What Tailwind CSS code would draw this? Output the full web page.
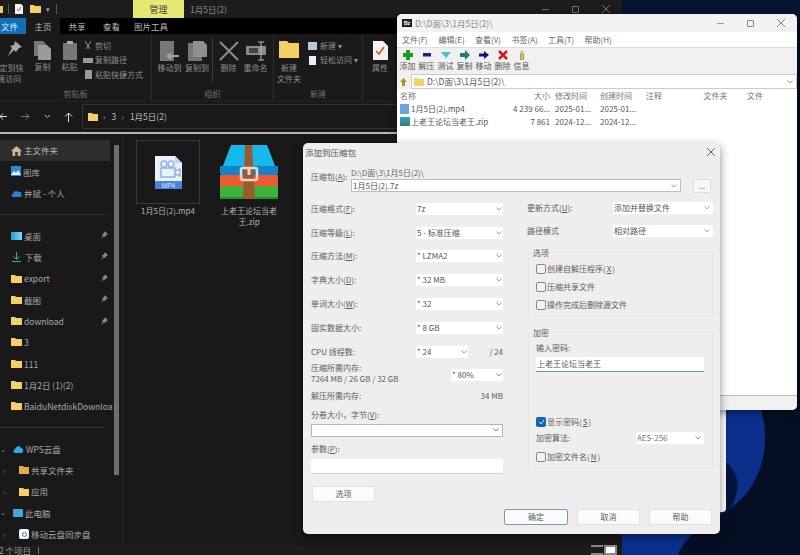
<!DOCTYPE html>
<html lang="zh-CN">
<head>
<meta charset="UTF-8">
<title>添加到压缩包</title>
<script src="https://cdn.jsdelivr.net/npm/@tailwindcss/browser@4"></script>
</head>
<body class="w-[800px] h-[555px] overflow-hidden relative bg-[#03102a] font-['Noto_Sans_CJK_SC','Noto_Sans',sans-serif] text-[9px] leading-none">

<!-- wallpaper -->
<svg class="absolute inset-0" width="800" height="555" viewBox="0 0 800 555">
  <rect width="800" height="555" fill="#040f24"/>
  <path d="M622 0H800V14H622Z" fill="#061433"/>
  <path d="M700 405H760C770 440 765 470 745 495C722 520 690 525 678 555H622V534H700Z" fill="#0c2f8c"/>
  <path d="M726 462C740 475 742 490 728 512L726 512Z" fill="#04123a"/>
</svg>

<!-- explorer window -->
<div class="absolute left-0 top-0 w-[622px] h-[555px] bg-[#191919] text-[#b9b9b9] flex flex-col overflow-hidden">
  <!-- title -->
  <div class="h-[18px] flex items-center bg-[#1c1c1c] shrink-0">
    <div class="w-[3px] h-[7px] bg-[#f4c95d]"></div>
    <div class="w-px h-[10px] bg-[#555] ml-[5px]"></div>
    <svg class="ml-[6px]" width="8" height="10" viewBox="0 0 8 10"><path d="M0 0H6L8 2V10H0Z" fill="#f4f4f4"/><path d="M2 5L3.500 7L6 3" stroke="#d9552b" fill="none"/></svg>
    <svg class="ml-[7px]" width="11" height="8" viewBox="0 0 11 8"><path d="M0 0H4L5 1H11V8H0Z" fill="#f6cf66"/></svg>
    <span class="ml-[5px] text-[7px] text-[#aaa]">▾</span>
    <div class="w-px h-[10px] bg-[#555] ml-[6px]"></div>
    <div class="ml-[76px] w-[51px] h-[18px] bg-[#e6e872] text-[#444] flex items-center justify-center text-[9px]">管理</div>
    <span class="ml-[6px] text-[8.500px] text-[#8a8a8a]">1月5日(2)</span>
    <div class="ml-auto flex items-center gap-[23px] pr-[12px] text-[#777]">
      <div class="w-[7px] h-px bg-[#777]"></div>
      <div class="w-[7px] h-[7px] border border-[#777] rounded-[1px]"></div>
      <svg width="8" height="8" viewBox="0 0 8 8"><path d="M0 0L8 8M8 0L0 8" stroke="#777"/></svg>
    </div>
  </div>
  <!-- tabs -->
  <div class="h-[16px] bg-black flex items-center shrink-0 text-[8.500px]">
    <div class="w-[26px] h-full bg-[#0f6fb8] text-[#dcefff] flex items-center pl-px">文件</div>
    <div class="w-[34px] h-full bg-[#1a1a1a] flex items-center justify-center">主页</div>
    <div class="w-[34px] text-center">共享</div>
    <div class="w-[35px] text-center">查看</div>
    <div class="ml-[5px]">图片工具</div>
  </div>
  <!-- ribbon -->
  <div class="h-[68px] bg-[#1a1a1a] flex shrink-0 text-[8px] text-[#8f8f8f] border-b border-[#222]">
    <div class="w-[152px] border-r border-[#2c2c2c] flex flex-col">
      <div class="flex-1 flex pt-[7px]">
        <div class="w-[29px] flex flex-col items-center">
          <svg width="17" height="16" viewBox="0 0 17 16"><path d="M9 0L16 6L13 7L10 11L8 9L2 15L6 7L4 5L8 4Z" fill="#a7a7a7"/></svg>
          <div class="mt-[5px] leading-[11px] text-center -ml-[14px] w-[36px] whitespace-nowrap">固定到快<br>&nbsp;&nbsp;速访问</div>
        </div>
        <div class="w-[27px] flex flex-col items-center">
          <svg width="17" height="19" viewBox="0 0 17 19"><path d="M0 0H9L12 3V15H0Z" fill="#777"/><path d="M4 4H13L17 8V19H4Z" fill="#9b9b9b"/></svg>
          <div class="mt-[3px]">复制</div>
        </div>
        <div class="w-[27px] flex flex-col items-center">
          <svg width="14" height="19" viewBox="0 0 14 19"><rect y="2" width="14" height="17" fill="#777"/><rect x="4" width="6" height="3" fill="#aaa"/></svg>
          <div class="mt-[3px]">粘贴</div>
        </div>
        <div class="flex flex-col gap-[3.500px] -mt-[1px] text-[#8f8f8f]">
          <div class="flex items-center gap-[2px] h-[11px]"><svg width="10" height="9" viewBox="0 0 10 9"><path d="M2 0L7 8M8 0L3 8" stroke="#999"/></svg>剪切</div>
          <div class="flex items-center gap-[2px] h-[11px]"><div class="w-[10px] h-[5px] bg-[#999]"></div>复制路径</div>
          <div class="flex items-center gap-[2px] h-[11px]"><div class="w-[7px] h-[9px] mx-[1.500px] bg-[#999]"></div>粘贴快捷方式</div>
        </div>
      </div>
      <div class="h-[15px] flex items-center justify-center text-[#6f6f6f]">剪贴板</div>
    </div>
    <div class="w-[122px] border-r border-[#2c2c2c] flex flex-col">
      <div class="flex-1 flex pt-[7px] pl-[4px]">
        <div class="w-[27px] flex flex-col items-center">
          <svg width="19" height="20" viewBox="0 0 19 20"><path d="M0 0H14V20H0Z" fill="#777"/><path d="M19 14H11V11L6 15L11 19V16H19Z" fill="#a3a3a3"/></svg>
          <div class="mt-[3px] whitespace-nowrap">移动到</div>
        </div>
        <div class="w-[28px] flex flex-col items-center">
          <svg width="19" height="20" viewBox="0 0 19 20"><path d="M0 2H14V20H0Z" fill="#777"/><path d="M5 0H15L19 4V16H5Z" fill="#8f8f8f"/></svg>
          <div class="mt-[3px] whitespace-nowrap">复制到</div>
        </div>
        <div class="w-px h-[44px] bg-[#3a3a3a] ml-[1px] -mt-[3px]"></div>
        <div class="w-[27px] ml-[2px] flex flex-col items-center">
          <svg width="20" height="20" viewBox="0 0 20 20"><path d="M1 1L19 19M19 1L1 19" stroke="#8c8c8c" stroke-width="2"/></svg>
          <div class="mt-[3px]">删除</div>
        </div>
        <div class="w-[27px] flex flex-col items-center">
          <svg width="20" height="20" viewBox="0 0 20 20"><rect x="0" y="5" width="20" height="9" fill="#8a8a8a"/><rect x="3" y="7" width="9" height="5" fill="#444"/><path d="M15 1V19M12 1H18M12 19H18" stroke="#bbb"/></svg>
          <div class="mt-[3px] whitespace-nowrap">重命名</div>
        </div>
      </div>
      <div class="h-[15px] flex items-center justify-center text-[#6f6f6f]">组织</div>
    </div>
    <div class="w-[89px] border-r border-[#2c2c2c] flex flex-col">
      <div class="flex-1 flex pt-[7px] pl-[2px]">
        <div class="w-[26px] flex flex-col items-center">
          <svg width="20" height="17" viewBox="0 0 20 17"><path d="M0 0H8L10 2H20V17H0Z" fill="#f6cf66"/></svg>
          <div class="mt-[4px] leading-[11px] text-center">新建<br><span class="whitespace-nowrap">文件夹</span></div>
        </div>
        <div class="flex flex-col gap-[3.500px] pl-[6px] -mt-[1px]">
          <div class="flex items-center gap-[3px] h-[11px]"><div class="w-[9px] h-[8px] bg-[#b8c8d8]"></div>新建 ▾</div>
          <div class="flex items-center gap-[3px] h-[11px] whitespace-nowrap"><div class="w-[7px] h-[9px] mx-px bg-[#eee]"></div>轻松访问 ▾</div>
        </div>
      </div>
      <div class="h-[15px] flex items-center justify-center text-[#6f6f6f]">新建</div>
    </div>
    <div class="w-[34px] flex flex-col pt-[7px] items-center">
      <svg width="15" height="19" viewBox="0 0 15 19"><path d="M0 0H10L15 5V19H0Z" fill="#f2f2f2"/><path d="M3 10L6 13L11 6" stroke="#d9552b" stroke-width="1.600" fill="none"/></svg>
      <div class="mt-[4px]">属性</div>
    </div>
  </div>
  <!-- address bar -->
  <div class="h-[30px] pb-[1px] flex items-center shrink-0 text-[#aaa] bg-[#191919]">
    <svg class="ml-[-1px]" width="9" height="9" viewBox="0 0 9 9"><path d="M8 4.500H1M4 1.500L1 4.500L4 7.500" stroke="#ddd" fill="none"/></svg>
    <svg class="ml-[13px]" width="9" height="9" viewBox="0 0 9 9"><path d="M0 4.500H8M5 1.500L8 4.500L5 7.500" stroke="#777" fill="none"/></svg>
    <svg class="ml-[14px]" width="7" height="5" viewBox="0 0 7 5"><path d="M1 1L3.500 3.500L6 1" stroke="#bbb" fill="none"/></svg>
    <svg class="ml-[13px]" width="9" height="10" viewBox="0 0 9 10"><path d="M4.500 10V1M1 4.500L4.500 1L8 4.500" stroke="#ddd" fill="none"/></svg>
    <div class="ml-[9px] h-[25px] w-[320px] border border-[#333] flex items-center pl-[5px] text-[8.500px] text-[#bbb]">
      <svg width="10" height="8" viewBox="0 0 10 8"><path d="M0 0H4L5 1H10V8H0Z" fill="#f6cf66"/></svg>
      <span class="ml-[5px] text-[#999]">›</span><span class="ml-[6px]">3</span><span class="ml-[5px] text-[#999]">›</span><span class="ml-[6px]">1月5日(2)</span>
    </div>
  </div>
  <div class="h-[2px] bg-[#b5b5b5] shrink-0"></div>
  <!-- body -->
  <div class="flex-1 flex min-h-0">
    <div class="w-[123px] border-r border-[#2a2a2a] shrink-0 flex pt-[6px] relative">
      <div class="w-[114px] flex flex-col text-[8.500px] text-[#a8a8a8] whitespace-nowrap overflow-hidden">
        <div class="h-[21.400px] flex items-center bg-[#2d2d2d] w-[110px] pl-[11px] gap-[2px] text-[#bbb]">
          <svg width="11" height="10" viewBox="0 0 11 10"><path d="M5.500 0L11 5H9.500V10H1.500V5H0Z" fill="#d9b48f"/><rect x="4" y="6" width="3" height="4" fill="#444"/></svg>主文件夹
        </div>
        <div class="h-[21.400px] flex items-center pl-[11px] gap-[2px]"><svg width="10" height="11" viewBox="0 0 10 11"><rect width="10" height="10" fill="#2e86de"/><path d="M0 9L3 5L5 7L7 4L10 9Z" fill="#dff"/></svg>图库</div>
        <div class="h-[21.400px] flex items-center pl-[11px] gap-[2px]"><svg width="11" height="7" viewBox="0 0 11 7"><path d="M2 7C0 7 0 4 2 4C2 1 6 0 7 2C9 1 11 3 10 4C11 5 11 7 9 7Z" fill="#2f7fd8"/></svg>井斌 - 个人</div>
        <div class="h-[21.400px] flex items-center"><div class="w-[105px] h-px bg-[#333]"></div></div>
        <div class="h-[21.400px] flex items-center pl-[11px] gap-[2px]"><div class="w-[11px] h-[8px] bg-gradient-to-r from-[#1f9bd1] to-[#7fd8f0]"></div>桌面</div>
        <div class="h-[21.400px] flex items-center pl-[12px] gap-[2px]"><svg width="9" height="10" viewBox="0 0 9 10"><path d="M4.500 0V7M1.500 4.500L4.500 7.500L7.500 4.500M0 9.500H9" stroke="#35b38f" fill="none"/></svg>&thinsp;下载</div>
        <div class="h-[21.400px] flex items-center pl-[11px] gap-[2px]"><svg width="11" height="8" viewBox="0 0 11 8"><path d="M0 0H4L5 1H11V8H0Z" fill="#f6cf66"/></svg>export</div>
        <div class="h-[21.400px] flex items-center pl-[11px] gap-[2px]"><svg width="11" height="8" viewBox="0 0 11 8"><path d="M0 0H4L5 1H11V8H0Z" fill="#f6cf66"/></svg>截图</div>
        <div class="h-[21.400px] flex items-center pl-[11px] gap-[2px]"><svg width="11" height="8" viewBox="0 0 11 8"><path d="M0 0H4L5 1H11V8H0Z" fill="#f6cf66"/></svg>download</div>
        <div class="h-[21.400px] flex items-center pl-[11px] gap-[2px]"><svg width="11" height="8" viewBox="0 0 11 8"><path d="M0 0H4L5 1H11V8H0Z" fill="#f6cf66"/></svg>3</div>
        <div class="h-[21.400px] flex items-center pl-[11px] gap-[2px]"><svg width="11" height="8" viewBox="0 0 11 8"><path d="M0 0H4L5 1H11V8H0Z" fill="#f6cf66"/></svg>111</div>
        <div class="h-[21.400px] flex items-center pl-[11px] gap-[2px]"><svg width="11" height="8" viewBox="0 0 11 8"><path d="M0 0H4L5 1H11V8H0Z" fill="#f6cf66"/></svg>1月2日 (1)(2)</div>
        <div class="h-[21.400px] flex items-center pl-[11px] gap-[2px]"><svg class="shrink-0" width="11" height="8" viewBox="0 0 11 8"><path d="M0 0H4L5 1H11V8H0Z" fill="#f6cf66"/></svg>BaiduNetdiskDownloa</div>
        <div class="h-[21.400px] flex items-center"><div class="w-[105px] h-px bg-[#333]"></div></div>
        <div class="h-[21.400px] flex items-center gap-[2px]"><span class="w-[11px] text-[#999] text-[7px]">⌄</span><svg width="11" height="8" viewBox="0 0 11 8"><path d="M2 8C0 8 0 5 2 4C3 1 7 0 8 3C10 3 11 6 9 8Z" fill="#2fa8e8"/></svg>WPS云盘</div>
        <div class="h-[21.400px] flex items-center pl-[3px] gap-[2px]"><span class="w-[14px] text-[#777]">›</span><svg width="10" height="8" viewBox="0 0 10 8"><path d="M0 0H4L5 1H10V8H0Z" fill="#e3ae4a"/></svg>共享文件夹</div>
        <div class="h-[21.400px] flex items-center pl-[3px] gap-[2px]"><span class="w-[14px] text-[#777]">›</span><svg width="10" height="8" viewBox="0 0 10 8"><path d="M0 0H4L5 1H10V8H0Z" fill="#f6cf66"/></svg>应用</div>
        <div class="h-[21.400px] flex items-center gap-[2px]"><span class="w-[11px] text-[#999] text-[7px]">⌄</span><div class="w-[10px] h-[8px] bg-[#3fa6d8] rounded-[1px]"></div>此电脑</div>
        <div class="h-[21.400px] flex items-center pl-[3px] gap-[2px]"><span class="w-[14px] text-[#777]">›</span><div class="w-[10px] h-[10px] bg-[#f4f8fb] rounded-[2px] flex items-center justify-center"><div class="w-[5px] h-[5px] rounded-full border border-[#2f8fd8]"></div></div>移动云盘同步盘</div>
      </div>
      <!-- pins -->
      <div class="absolute left-[101px] top-[90px] flex flex-col">
        <svg class="h-[21.400px]" width="7" height="21" viewBox="0 0 7 21"><path d="M4 7L7 10L5 11L4 13L3 12L0 15L2 11L1 10L3 9Z" fill="#8a8a8a"/></svg>
        <svg class="h-[21.400px]" width="7" height="21" viewBox="0 0 7 21"><path d="M4 7L7 10L5 11L4 13L3 12L0 15L2 11L1 10L3 9Z" fill="#8a8a8a"/></svg>
        <svg class="h-[21.400px]" width="7" height="21" viewBox="0 0 7 21"><path d="M4 7L7 10L5 11L4 13L3 12L0 15L2 11L1 10L3 9Z" fill="#8a8a8a"/></svg>
        <svg class="h-[21.400px]" width="7" height="21" viewBox="0 0 7 21"><path d="M4 7L7 10L5 11L4 13L3 12L0 15L2 11L1 10L3 9Z" fill="#8a8a8a"/></svg>
        <svg class="h-[21.400px]" width="7" height="21" viewBox="0 0 7 21"><path d="M4 7L7 10L5 11L4 13L3 12L0 15L2 11L1 10L3 9Z" fill="#8a8a8a"/></svg>
      </div>
      <!-- scrollbar -->
      <div class="absolute left-[114px] top-[11px] w-[5px] h-[330px] bg-[#6f6f6f]"></div>
    </div>
    <!-- files -->
    <div class="flex-1 flex items-start pl-[13px] pt-[6px] gap-[17px] text-[8px] text-[#b5b5b5] text-center">
      <div class="w-[64px] flex flex-col items-center">
        <div class="w-[64px] h-[64px] border border-[#3a3a3a] flex items-center justify-center">
          <svg width="27" height="33" viewBox="0 0 27 33"><path d="M0 0H20L27 7V33H0Z" fill="#eaf1fb"/><path d="M20 0L27 7H20Z" fill="#bcd2f2"/><rect y="25" width="27" height="8" fill="#4c84dc"/><g fill="none" stroke="#8fb2e8" stroke-width="1.500"><circle cx="9" cy="8" r="3"/><circle cx="16" cy="8" r="3"/><rect x="6" y="12" width="14" height="9"/><path d="M20 15L25 13V20L20 18"/></g><text x="13.500" y="31.500" font-size="6.500" fill="#dce8fa" text-anchor="middle" font-family="Liberation Sans">MP4</text></svg>
        </div>
        <div class="mt-[3px] whitespace-nowrap">1月5日(2).mp4</div>
      </div>
      <div class="w-[64px] flex flex-col items-center">
        <svg class="mt-[5px]" width="60" height="55" viewBox="0 0 60 55"><path d="M12 0H48L58 26H2Z" fill="#17b9ec"/><path d="M1 21H59V28Q59 30 57 30H3Q1 30 1 28Z" fill="#1484c7"/><rect x="1" y="30" width="58" height="12" fill="#ee5a34"/><rect x="1" y="41" width="58" height="13" rx="2" fill="#3fb23a"/><rect x="1" y="52" width="58" height="2" fill="#2c8d2a"/><path d="M26 0H33L36 54H24Z" fill="#9a5a30"/><rect x="22" y="23" width="16" height="12" rx="2" fill="none" stroke="#ead9c8" stroke-width="2.500"/><rect x="28.500" y="24" width="3" height="6" fill="#ead9c8"/></svg>
        <div class="mt-[5px] leading-[11px] w-[60px]">上老王论坛当老王.zip</div>
      </div>
    </div>
  </div>
  <!-- status -->
  <div class="h-[10px] shrink-0 bg-[#1c1c1c] flex items-center text-[8.500px] text-[#999] relative">
    <span class="-ml-px">2 个项目</span><div class="ml-[7px] w-px h-[7px] bg-[#777]"></div>
    <div class="ml-auto mr-[5px] flex items-center gap-[1px]">
      <div class="w-[12px] h-[10px] border-y-2 border-[#888]"></div>
      <div class="w-[13px] h-[10px] border-2 border-[#888] bg-white"></div>
    </div>
  </div>
</div>

<!-- white window behind the dialog -->
<div class="absolute left-[700px] top-[400px] w-[26px] h-[112px] bg-white rounded-br-[4px]"></div>

<!-- winrar window -->
<div class="absolute left-[397px] top-[14px] w-[400px] h-[396px] bg-white rounded-[5px] overflow-hidden flex flex-col text-[#555] shadow-[0_2px_8px_rgba(0,0,0,0.5)] text-[8.500px]">
  <div class="h-[18px] bg-[#f2f2f2] flex items-center shrink-0 pl-[5px]">
    <div class="w-[10px] h-[8px] bg-[#333] border border-[#111] flex items-center justify-center text-[5px] text-white font-bold font-['Liberation_Sans']">Bz</div>
    <span class="ml-[3px] text-[#888]">D:\D面\3\1月5日(2)\</span>
    <div class="ml-auto flex items-center gap-[23px] pr-[12px]">
      <div class="w-[7px] h-px bg-[#999]"></div>
      <div class="w-[7px] h-[7px] border border-[#888] rounded-[1px]"></div>
      <svg width="8" height="8" viewBox="0 0 8 8"><path d="M0 0L8 8M8 0L0 8" stroke="#888"/></svg>
    </div>
  </div>
  <div class="h-[15px] pt-px bg-white flex items-center shrink-0 pl-[5px] text-[8px] text-[#666] whitespace-nowrap">
    <span class="w-[36.500px]">文件(F)</span><span class="w-[36.500px]">编辑(E)</span><span class="w-[36.500px]">查看(V)</span><span class="w-[36.500px]">书签(A)</span><span class="w-[36.500px]">工具(T)</span><span class="w-[36.500px]">帮助(H)</span>
  </div>
  <div class="h-[27px] bg-[#f0f0f0] flex shrink-0 pl-[1px] text-[8px] text-[#555] border-t border-[#ddd]">
    <div class="w-[19px] flex flex-col items-center pt-[2px] gap-[2px]"><svg width="10" height="10" viewBox="0 0 10 10"><path d="M3 0H7V3H10V7H7V10H3V7H0V3H3Z" fill="#1aa01a"/></svg>添加</div>
    <div class="w-[19px] flex flex-col items-center pt-[2px] gap-[2px]"><svg width="10" height="10" viewBox="0 0 10 10"><rect x="1" y="3" width="8" height="3.500" fill="#1d1d9c"/></svg>解压</div>
    <div class="w-[19px] flex flex-col items-center pt-[2px] gap-[2px]"><svg width="10" height="10" viewBox="0 0 10 10"><path d="M0 2H10L5 8Z" fill="#3fc4d6"/></svg>测试</div>
    <div class="w-[19px] flex flex-col items-center pt-[2px] gap-[2px]"><svg width="10" height="10" viewBox="0 0 10 10"><path d="M0 3H5V0L10 5L5 10V7H0Z" fill="#14806f"/></svg>复制</div>
    <div class="w-[19px] flex flex-col items-center pt-[2px] gap-[2px]"><svg width="10" height="10" viewBox="0 0 10 10"><path d="M0 3.500H5V1L10 5L5 9V6.500H0Z" fill="#14147c"/></svg>移动</div>
    <div class="w-[19px] flex flex-col items-center pt-[2px] gap-[2px]"><svg width="10" height="10" viewBox="0 0 10 10"><path d="M1 1L9 9M9 1L1 9" stroke="#d41b1b" stroke-width="2.500"/></svg>删除</div>
    <div class="w-[19px] flex flex-col items-center pt-[2px] gap-[2px]"><svg width="10" height="10" viewBox="0 0 10 10"><circle cx="5" cy="2" r="1.500" fill="#d8c23c"/><rect x="3.500" y="4" width="3" height="6" fill="#d8c23c" stroke="#666" stroke-width=".5"/></svg>信息</div>
  </div>
  <div class="h-[15px] bg-[#f0f0f0] flex items-center shrink-0 pl-[3px]">
    <svg width="7" height="8" viewBox="0 0 7 8"><path d="M3.500 0L7 4H5V8H2V4H0Z" fill="#9a9a2a"/></svg>
    <div class="ml-[4px] flex-1 h-[15px] bg-white border border-[#ccc] flex items-center pl-[2px] text-[#555]">
      <svg width="10" height="8" viewBox="0 0 10 8"><path d="M0 0H4L5 1H10V8H0Z" fill="#f6cf66"/></svg><span class="ml-[3px]">D:\D面\3\1月5日(2)\</span>
      <svg class="ml-auto mr-[3px]" width="6" height="4" viewBox="0 0 6 4"><path d="M.5 .5L3 3L5.500 .5" stroke="#999" fill="none"/></svg>
    </div>
  </div>
  <div class="flex-1 bg-white flex flex-col min-h-0 text-[8px]">
    <div class="h-[14px] flex items-center shrink-0 text-[#777]">
      <span class="w-[113px] pl-[3px]">名称</span><span class="w-[43px] text-right pr-[3px]">大小</span>
      <span class="w-[45px] pl-[2px]">修改时间</span><span class="w-[45px] pl-[2px]">创建时间</span>
      <span class="w-[45px] pl-[3px]">注释</span><span class="w-[55px] text-center">文件夹</span><span class="w-[45px] pl-[4px]">文件</span>
    </div>
    <div class="h-[13px] mt-[-1px] flex items-center shrink-0 text-[#555]">
      <span class="w-[113px] pl-[3px] flex items-center gap-[2px]"><span class="w-[9px] h-[10px] bg-[#6fa3dc] inline-block"></span>1月5日(2).mp4</span><span class="w-[43px] text-right pr-[3px] whitespace-nowrap">4 239 66...</span>
      <span class="w-[45px] pl-[2px] whitespace-nowrap">2025-01...</span><span class="w-[45px] pl-[2px] whitespace-nowrap">2025-01...</span>
    </div>
    <div class="h-[13px] flex items-center shrink-0 text-[#555]">
      <span class="w-[113px] pl-[3px] flex items-center gap-[1px] whitespace-nowrap"><span class="w-[10px] h-[9px] bg-gradient-to-b from-[#2aa3d8] to-[#3a7a6a] inline-block"></span>上老王论坛当老王.zip</span><span class="w-[43px] text-right pr-[3px]">7 861</span>
      <span class="w-[45px] pl-[2px] whitespace-nowrap">2024-12...</span><span class="w-[45px] pl-[2px] whitespace-nowrap">2024-12...</span>
    </div>
  </div>
  <div class="h-[15px] bg-[#f0f0f0] border-t border-[#bbb] shrink-0"></div>
</div>

<!-- compression dialog -->
<div class="absolute left-[303px] top-[143px] w-[417px] h-[391px] bg-[#eeeeee] rounded-[5px] shadow-[0_3px_10px_rgba(0,0,0,0.45)] flex flex-col text-[#5c5c5c] text-[8px] whitespace-nowrap">
  <div class="h-[16px] flex items-center pl-[2px] justify-between shrink-0 pt-[2px] text-[#555]">
    <span class="text-[8.500px]">添加到压缩包</span>
    <svg class="mr-[5px]" width="8" height="8" viewBox="0 0 8 8"><path d="M0 0L8 8M8 0L0 8" stroke="#666"/></svg>
  </div>
  <!-- archive name -->
  <div class="flex pl-[8px] pr-[9px] shrink-0 h-[35px]">
    <span class="w-[40px] pt-[14px]">压缩包(<u>A</u>):</span>
    <div class="flex flex-col gap-[2px] pt-[10px]">
      <span class="text-[8px] text-[#666]">D:\D面\3\1月5日(2)\</span>
      <div class="w-[330px] h-[13px] bg-white border border-[#bdbdbd] flex items-center pl-[1px] text-[#555]">1月5日(2).7z
        <svg class="ml-auto mr-[3px]" width="6" height="4" viewBox="0 0 6 4"><path d="M.5 .5L3 3L5.500 .5" stroke="#aaa" fill="none"/></svg>
      </div>
    </div>
    <div class="ml-[12px] mt-[20px] w-[18px] h-[14px] bg-[#f7f7f7] border border-[#ddd] flex items-center justify-center text-[#777]">...</div>
  </div>
  <div class="flex flex-1 min-h-0 pl-[8px] pr-[7px]">
    <!-- left column -->
    <div class="w-[192px] flex flex-col pt-[3px]">
      <div class="h-[23.800px] flex items-center justify-between"><span>压缩格式(<u>F</u>):</span><span class="w-[87px] h-[12px] bg-white flex items-center justify-between px-px text-[#555]">7z<svg width="6" height="4" viewBox="0 0 6 4"><path d="M.5 .5L3 3L5.500 .5" stroke="#999" fill="none"/></svg></span></div>
      <div class="h-[23.800px] flex items-center justify-between"><span>压缩等级(<u>L</u>):</span><span class="w-[87px] h-[12px] bg-white flex items-center justify-between px-px text-[#555]">5 - 标准压缩<svg width="6" height="4" viewBox="0 0 6 4"><path d="M.5 .5L3 3L5.500 .5" stroke="#999" fill="none"/></svg></span></div>
      <div class="h-[23.800px] flex items-center justify-between"><span>压缩方法(<u>M</u>):</span><span class="w-[87px] h-[12px] bg-white flex items-center justify-between px-px text-[#555]">* LZMA2<svg width="6" height="4" viewBox="0 0 6 4"><path d="M.5 .5L3 3L5.500 .5" stroke="#999" fill="none"/></svg></span></div>
      <div class="h-[23.800px] flex items-center justify-between"><span>字典大小(<u>D</u>):</span><span class="w-[87px] h-[12px] bg-white flex items-center justify-between px-px text-[#555]">* 32 MB<svg width="6" height="4" viewBox="0 0 6 4"><path d="M.5 .5L3 3L5.500 .5" stroke="#999" fill="none"/></svg></span></div>
      <div class="h-[23.800px] flex items-center justify-between"><span>单词大小(<u>W</u>):</span><span class="w-[87px] h-[12px] bg-white flex items-center justify-between px-px text-[#555]">* 32<svg width="6" height="4" viewBox="0 0 6 4"><path d="M.5 .5L3 3L5.500 .5" stroke="#999" fill="none"/></svg></span></div>
      <div class="h-[23.800px] flex items-center justify-between"><span>固实数据大小:</span><span class="w-[87px] h-[12px] bg-white flex items-center justify-between px-px text-[#555]">* 8 GB<svg width="6" height="4" viewBox="0 0 6 4"><path d="M.5 .5L3 3L5.500 .5" stroke="#999" fill="none"/></svg></span></div>
      <div class="h-[23.800px] flex items-center"><span class="w-[105px]">CPU 线程数:</span><span class="w-[52px] h-[12px] bg-white flex items-center justify-between px-px text-[#555]">* 24<svg width="6" height="4" viewBox="0 0 6 4"><path d="M.5 .5L3 3L5.500 .5" stroke="#999" fill="none"/></svg></span><span class="ml-auto">/ 24</span></div>
      <div class="h-[26px] flex items-center justify-between -mt-[3px]">
        <span class="flex flex-col gap-[3px]"><span>压缩所需内存:</span><span>7264 MB / 26 GB / 32 GB</span></span>
        <span class="w-[52px] h-[12px] mt-[2px] bg-white flex items-center justify-between px-px text-[#555]">* 80%<svg width="6" height="4" viewBox="0 0 6 4"><path d="M.5 .5L3 3L5.500 .5" stroke="#999" fill="none"/></svg></span>
      </div>
      <div class="h-[14px] flex items-center justify-between mt-[2px]"><span>解压所需内存:</span><span>34 MB</span></div>
      <div class="mt-[8px] h-[10px]">分卷大小，字节(<u>V</u>):</div>
      <div class="mt-[3px] h-[13px] bg-white border border-[#b5b5b5] flex items-center justify-end pr-[3px]"><svg width="6" height="4" viewBox="0 0 6 4"><path d="M.5 .5L3 3L5.500 .5" stroke="#888" fill="none"/></svg></div>
      <div class="mt-[8px] h-[10px]">参数(<u>P</u>):</div>
      <div class="mt-[4px] h-[15px] bg-white border-b border-[#d5d5d5]"></div>
      <div class="mt-[12px] ml-px w-[63px] h-[16px] bg-[#fbfbfb] border border-[#e2e2e2] flex items-center justify-center">选项</div>
    </div>
    <!-- right column -->
    <div class="ml-[24px] flex-1 flex flex-col pt-[3px] min-w-0">
      <div class="h-[22.500px] flex items-center justify-between"><span>更新方式(<u>U</u>):</span><span class="w-[100px] h-[12px] bg-white flex items-center justify-between px-px pr-[3px] text-[#555]">添加并替换文件<svg width="6" height="4" viewBox="0 0 6 4"><path d="M.5 .5L3 3L5.500 .5" stroke="#aaa" fill="none"/></svg></span></div>
      <div class="h-[22.500px] flex items-center justify-between"><span>路径模式</span><span class="w-[100px] h-[12px] bg-white flex items-center justify-between px-px pr-[3px] text-[#555]">相对路径<svg width="6" height="4" viewBox="0 0 6 4"><path d="M.5 .5L3 3L5.500 .5" stroke="#aaa" fill="none"/></svg></span></div>
      <!-- options group -->
      <div class="mt-[10px] h-[65px] ml-px border border-[#e6e6e6] rounded-[2px] relative flex flex-col pl-[7px] pt-[10px] gap-[6px]">
        <span class="absolute -top-[4px] left-[3px] bg-[#eeeeee] px-px">选项</span>
        <label class="flex items-center gap-[1px] h-[12px]"><span class="w-[10px] h-[10px] border border-[#888] rounded-[2px] bg-[#f2f2f2]"></span>创建自解压程序(<u>X</u>)</label>
        <label class="flex items-center gap-[1px] h-[12px]"><span class="w-[10px] h-[10px] border border-[#888] rounded-[2px] bg-[#f2f2f2]"></span>压缩共享文件</label>
        <label class="flex items-center gap-[1px] h-[12px]"><span class="w-[10px] h-[10px] border border-[#888] rounded-[2px] bg-[#f2f2f2]"></span>操作完成后删除源文件</label>
      </div>
      <!-- encryption group -->
      <div class="mt-[15px] h-[137px] ml-px border border-[#e6e6e6] rounded-[2px] relative flex flex-col pl-[7px] pr-[8px] pt-[11px]">
        <span class="absolute -top-[4px] left-[3px] bg-[#eeeeee] px-px">加密</span>
        <span class="h-[10px]">输入密码:</span>
        <div class="mt-[3px] h-[15px] bg-white border-b border-[#5b9bb8] flex items-center pl-[1px] text-[#555]">上老王论坛当老王</div>
        <label class="mt-[44px] flex items-center gap-[1px] h-[12px]"><span class="w-[10px] h-[10px] rounded-[2px] bg-[#0f67b8] flex items-center justify-center"><svg width="7" height="6" viewBox="0 0 7 6"><path d="M1 3L3 5L6 1" stroke="#cfe6ff" fill="none"/></svg></span>显示密码(<u>S</u>)</label>
        <div class="mt-[4px] h-[12px] flex items-center justify-between"><span>加密算法:</span><span class="w-[68px] h-[12px] bg-white flex items-center justify-between px-px pr-[3px] text-[#777]">AES-256<svg width="6" height="4" viewBox="0 0 6 4"><path d="M.5 .5L3 3L5.500 .5" stroke="#999" fill="none"/></svg></span></div>
        <label class="mt-[7px] flex items-center gap-[1px] h-[12px]"><span class="w-[10px] h-[10px] border border-[#888] rounded-[2px] bg-[#f2f2f2]"></span>加密文件名(<u>N</u>)</label>
      </div>
    </div>
  </div>
  <!-- dialog buttons -->
  <div class="absolute left-[201px] top-[366px] flex gap-[9px]">
    <div class="w-[64px] h-[16px] bg-[#fbfbfb] border border-[#6f9fb8] rounded-[2px] flex items-center justify-center">确定</div>
    <div class="w-[63px] h-[16px] bg-[#fbfbfb] border border-[#e2e2e2] flex items-center justify-center">取消</div>
    <div class="w-[63px] h-[16px] bg-[#fbfbfb] border border-[#e2e2e2] flex items-center justify-center">帮助</div>
  </div>
</div>
</body>
</html>
